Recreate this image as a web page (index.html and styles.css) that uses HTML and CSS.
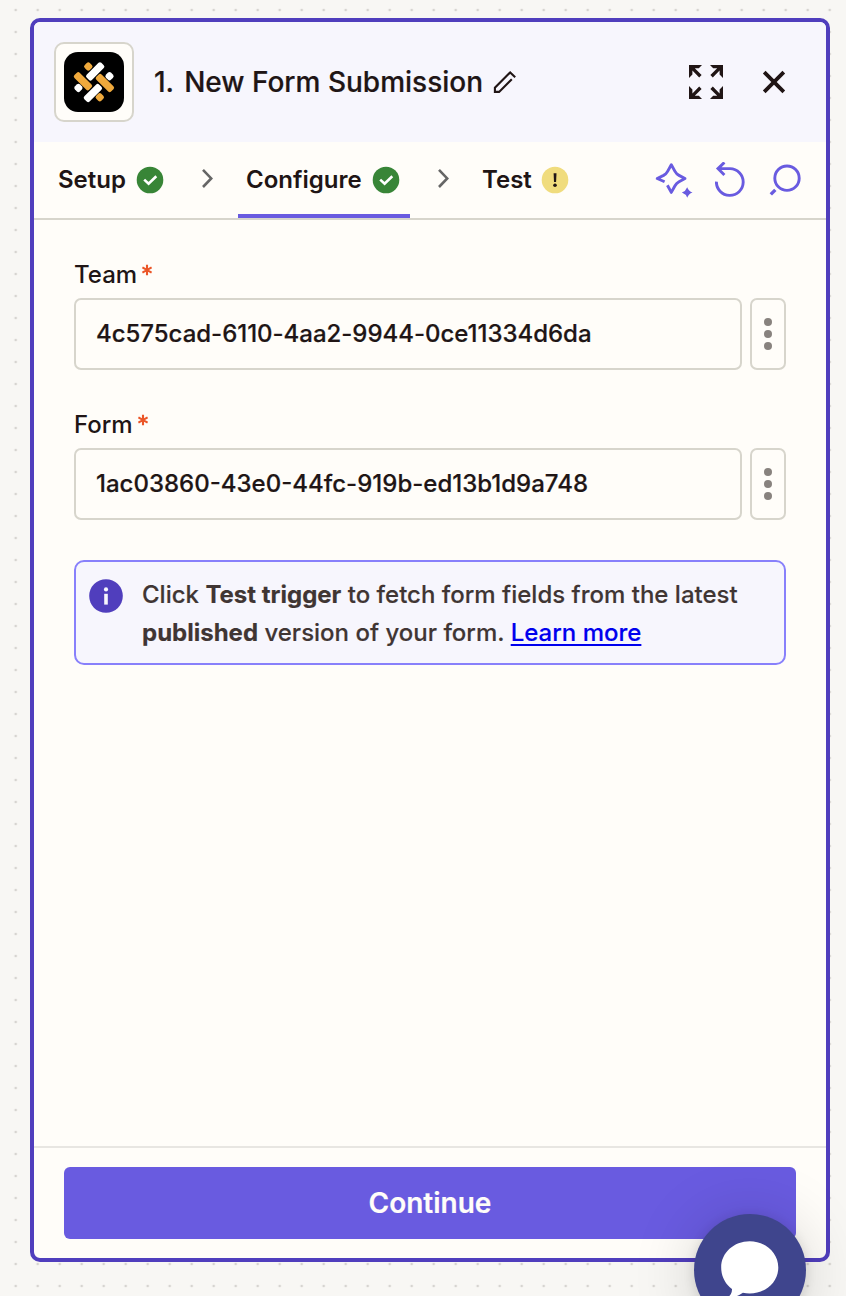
FILE: index.html
```html
<!DOCTYPE html>
<html lang="en">
<head>
<meta charset="utf-8">
<title>New Form Submission</title>
<link rel="stylesheet" href="styles.css">
</head>
<body>
<main class="panel">
  <header class="header">
    <div class="app-icon">
      <svg width="60" height="60" viewBox="0 0 60 60">
        <rect width="60" height="60" rx="14" fill="#000"/>
        <g fill="#efa93c">
          <rect x="-10.4" y="-3.7" width="20.8" height="7.4" rx="2" transform="translate(19 29.2) rotate(45)"/>
          <rect x="-10.4" y="-3.7" width="20.8" height="7.4" rx="2" transform="translate(40.9 31) rotate(45)"/>
          <rect x="-3.6" y="-3.6" width="7.2" height="7.2" rx="2.2" transform="translate(24.3 14.5) rotate(45)"/>
          <rect x="-3.6" y="-3.6" width="7.2" height="7.2" rx="2.2" transform="translate(35.8 45.3) rotate(45)"/>
        </g>
        <g fill="#fff">
          <rect x="-10.4" y="-3.7" width="20.8" height="7.4" rx="2" transform="translate(31.2 19.4) rotate(-45)"/>
          <rect x="-10.4" y="-3.7" width="20.8" height="7.4" rx="2" transform="translate(28.9 41) rotate(-45)"/>
          <rect x="-3.6" y="-3.6" width="7.2" height="7.2" rx="2.4" transform="translate(45.5 24.2) rotate(45)"/>
          <rect x="-3.6" y="-3.6" width="7.2" height="7.2" rx="2.4" transform="translate(14.4 35.9) rotate(45)"/>
        </g>
      </svg>
    </div>
    <h1 class="title"><span class="step">1.</span><span>New Form Submission</span></h1>
    <svg class="edit" width="24" height="24" viewBox="0 0 24 24" fill="none" stroke="#201515" stroke-width="2.1">
      <path d="M22.2 7.2 17.2 2.4 1.9 17.7V21.9H6.1L18.8 9.2"/>
    </svg>
    <div class="header-actions">
      <svg width="36" height="36" viewBox="0 0 36 36" fill="#201515">
        <g id="arrow"><path d="M1 1H14L10.8 4.2H6.8L13.6 11 11.2 13.4 4.4 6.6V10.6L1 14Z"/></g>
        <use href="#arrow" transform="matrix(-1 0 0 1 36 0)"/>
        <use href="#arrow" transform="matrix(1 0 0 -1 0 36)"/>
        <use href="#arrow" transform="matrix(-1 0 0 -1 36 36)"/>
      </svg>
      <svg width="24" height="24" viewBox="0 0 24 24" fill="none" stroke="#201515" stroke-width="3.8">
        <path d="M2.2 2.2 21.8 21.8M21.8 2.2 2.2 21.8"/>
      </svg>
    </div>
  </header>

  <nav class="tabs">
    <div class="tab setup"><span>Setup</span>
      <svg width="28" height="28" viewBox="0 0 28 28"><circle cx="14" cy="14" r="13.3" fill="#388537"/><path d="M8.2 13.6 12.6 17.8 20.3 10.2" fill="none" stroke="#fff" stroke-width="2.6"/></svg>
    </div>
    <svg class="chevron" width="14" height="22" viewBox="0 0 14 22"><path d="M3 1.8 11.2 10.4 3 19" fill="none" stroke="#666" stroke-width="2.6"/></svg>
    <div class="tab active"><span>Configure</span>
      <svg width="28" height="28" viewBox="0 0 28 28"><circle cx="14" cy="14" r="13.3" fill="#388537"/><path d="M8.2 13.6 12.6 17.8 20.3 10.2" fill="none" stroke="#fff" stroke-width="2.6"/></svg>
    </div>
    <svg class="chevron" width="14" height="22" viewBox="0 0 14 22"><path d="M3 1.8 11.2 10.4 3 19" fill="none" stroke="#666" stroke-width="2.6"/></svg>
    <div class="tab test"><span>Test</span>
      <svg width="28" height="28" viewBox="0 0 28 28"><circle cx="14" cy="14" r="13.3" fill="#f0dc7d"/><path d="M12.6 7.2h2.9l-.4 8.8h-2.1z" fill="#201515"/><circle cx="14" cy="19.2" r="1.8" fill="#201515"/></svg>
    </div>
    <div class="tools">
      <svg width="38" height="36" viewBox="0 0 38 36" fill="none" stroke="#695be0" stroke-width="2.9" stroke-linejoin="round">
        <path d="M9.6 19.8 2.2 16.5 8.6 13.4Q11.2 12 12.6 9.4L16.3 2.8 20 9.4Q21.4 12 24 13.4L30 16.5 24 19.8Q21.4 21.2 20 23.8L16.3 30.4 12.4 23.2"/>
        <path d="M32.2 25.2Q33.6 29.1 37.5 30.5 33.6 31.9 32.2 35.8 30.8 31.9 26.9 30.5 30.8 29.1 32.2 25.2Z" fill="#695be0" stroke="none"/>
      </svg>
      <svg width="32" height="36" viewBox="0 0 32 36" fill="none" stroke="#695be0" stroke-width="2.9">
        <path d="M3 6.6H15A13.4 13.4 0 1 1 1.4 19.6M9.4 .4 3 6.6 9.4 13"/>
      </svg>
      <svg width="32" height="36" viewBox="0 0 32 36" fill="none" stroke="#695be0">
        <circle cx="18" cy="16.2" r="12.2" stroke-width="2.9"/><path d="M1.8 32.4 6.3 27.9" stroke-width="3.4"/>
      </svg>
    </div>
  </nav>

  <section class="body">
    <label class="label team">Team<svg class="required" width="12" height="12" viewBox="0 0 12 12"><path d="M6 .8V11.2M1.4 3.4 10.6 8.6M10.6 3.4 1.4 8.6" stroke="#eb5628" stroke-width="2.1"/></svg></label>
    <div class="row">
      <div class="input"><span class="team-value">4c575cad-6110-4aa2-9944-0ce11334d6da</span></div>
      <div class="menu"><i class="dot"></i><i class="dot"></i><i class="dot"></i></div>
    </div>
    <label class="label form">Form<svg class="required" width="12" height="12" viewBox="0 0 12 12"><path d="M6 .8V11.2M1.4 3.4 10.6 8.6M10.6 3.4 1.4 8.6" stroke="#eb5628" stroke-width="2.1"/></svg></label>
    <div class="row">
      <div class="input"><span class="form-value">1ac03860-43e0-44fc-919b-ed13b1d9a748</span></div>
      <div class="menu"><i class="dot"></i><i class="dot"></i><i class="dot"></i></div>
    </div>
    <div class="info">
      <svg width="34" height="34" viewBox="0 0 34 34"><circle cx="17" cy="17" r="16.8" fill="#503ebd"/><circle cx="17" cy="10.4" r="2.1" fill="#f7f6fd"/><path d="M15.2 14.8h3.6v10.8h-3.6z" fill="#f7f6fd"/></svg>
      <p class="message"><span class="line1">Click <b>Test trigger</b> to fetch form fields from the latest</span><br><span class="line2"><b>published</b> version of your form. <a href="#">Learn more</a></span></p>
    </div>
  </section>

  <footer class="footer"><button class="continue">Continue</button></footer>
</main>
<div class="chat">
  <svg width="112" height="112" viewBox="0 0 112 112"><path d="M55.7 27.3C71.5 27.3 84.3 38.8 84.3 53.5S71.5 79.5 55.7 79.5C53.3 79.5 51 79.3 48.9 78.8C44 82 39 84.4 33 84.5C36.5 81.6 38.2 78.6 38 75C31.4 70.3 27.2 62.4 27.2 53.5C27.2 38.8 39.9 27.3 55.7 27.3Z" fill="#fff"/></svg>
</div>
</body>
</html>
```
FILE: styles.css
```css
* { box-sizing: border-box; }
html, body { margin: 0; height: 1296px; overflow: hidden; }
body {
  padding: 18px 16px 34px 30px;
  font-family: Inter, "Liberation Sans", sans-serif;
  color: #201515;
  background-color: #f8f7f4;
  background-image: radial-gradient(circle at 11px 11px, #d6d4d0 1px, transparent 1.7px);
  background-size: 22px 22px;
  background-position: 4.7px -1px;
}
svg { display: block; flex: none; }
.panel {
  height: 1244px;
  display: flex;
  flex-direction: column;
  border: 4px solid #503ebd;
  border-radius: 10px;
  background: #fffdf9;
  overflow: hidden;
}
.header { height: 120px; flex: none; display: flex; align-items: center; padding: 0 40px 0 20px; background: #f7f6fd; }
.app-icon { width: 80px; height: 80px; padding: 8px; border: 2px solid #d7d5cc; border-radius: 10px; background: #fffdf9; }
.title { display: flex; gap: 10px; margin: 0 0 0 20px; font-size: 28px; line-height: 40px; font-weight: 500; white-space: nowrap; -webkit-text-stroke: 0.2px; }
.edit { margin-left: 10px; }
.header-actions { display: flex; align-items: center; gap: 38px; margin-left: auto; }
.tabs { height: 78px; flex: none; display: flex; align-items: stretch; padding: 0 25px 0 24px; border-bottom: 2px solid #d7d5cc; font-size: 24px; font-weight: 600; }
.tab { display: flex; align-items: center; justify-content: space-between; }
.tab span { margin-top: -2px; }
.setup { width: 106px; }
.chevron { align-self: center; margin-top: -3px; }
.setup + .chevron { margin-left: 36px; }
.active { width: 172px; margin-left: 24px; padding: 4px 10px 0 8px; border-bottom: 4px solid #695be0; }
.active + .chevron { margin-left: 26px; }
.test { width: 87px; margin-left: 32px; }
.tools { display: flex; align-items: center; gap: 22px; margin-left: auto; }
.body { flex: 1; padding: 36px 40px 0; }
.label { display: flex; height: 42px; font-size: 24px; line-height: 37px; font-weight: 500; }
.required { margin: 8px 0 0 4px; }
.row { display: flex; gap: 8px; height: 72px; }
.row + .label { margin-top: 36px; }
.input { flex: 1; display: flex; align-items: center; padding: 0 20px 2px; border: 2px solid #d7d5cc; border-radius: 7px; font-size: 24px; font-weight: 500; -webkit-text-stroke: 0.2px; }
.team-value { letter-spacing: -0.03px; }
.menu { width: 36px; display: flex; flex-direction: column; align-items: center; justify-content: center; gap: 4px; border: 2px solid #d7d5cc; border-radius: 7px; }
.dot { width: 8px; height: 8px; border-radius: 50%; background: #88827e; }
.info { display: flex; height: 105px; gap: 19px; margin-top: 40px; padding: 17px 13px; border: 2px solid #8880fb; border-radius: 10px; background: #f7f6fd; }
.message { margin: -3px 0 0; font-size: 24px; line-height: 38px; font-weight: 450; color: #403533; white-space: nowrap; -webkit-text-stroke: 0.15px; }
.message b { font-weight: 700; }
.message a { color: #00e; font-weight: 500; text-underline-offset: 3px; text-decoration-thickness: 2px; }
.footer { height: 112px; flex: none; padding: 19px 30px; border-top: 2px solid #e8e6e2; }
.continue { display: block; width: 100%; height: 72px; padding: 0; border: 0; border-radius: 6px; background: #695be0; color: #fffdf9; font: 600 28px/72px Inter, "Liberation Sans", sans-serif; -webkit-text-stroke: 0.2px; }
.chat { position: absolute; left: 694px; top: 1214px; width: 112px; height: 112px; border-radius: 50%; background: #3f458d; box-shadow: 0 2px 12px rgba(0,0,0,.12), 0 4px 64px rgba(0,0,0,.17); }
```
